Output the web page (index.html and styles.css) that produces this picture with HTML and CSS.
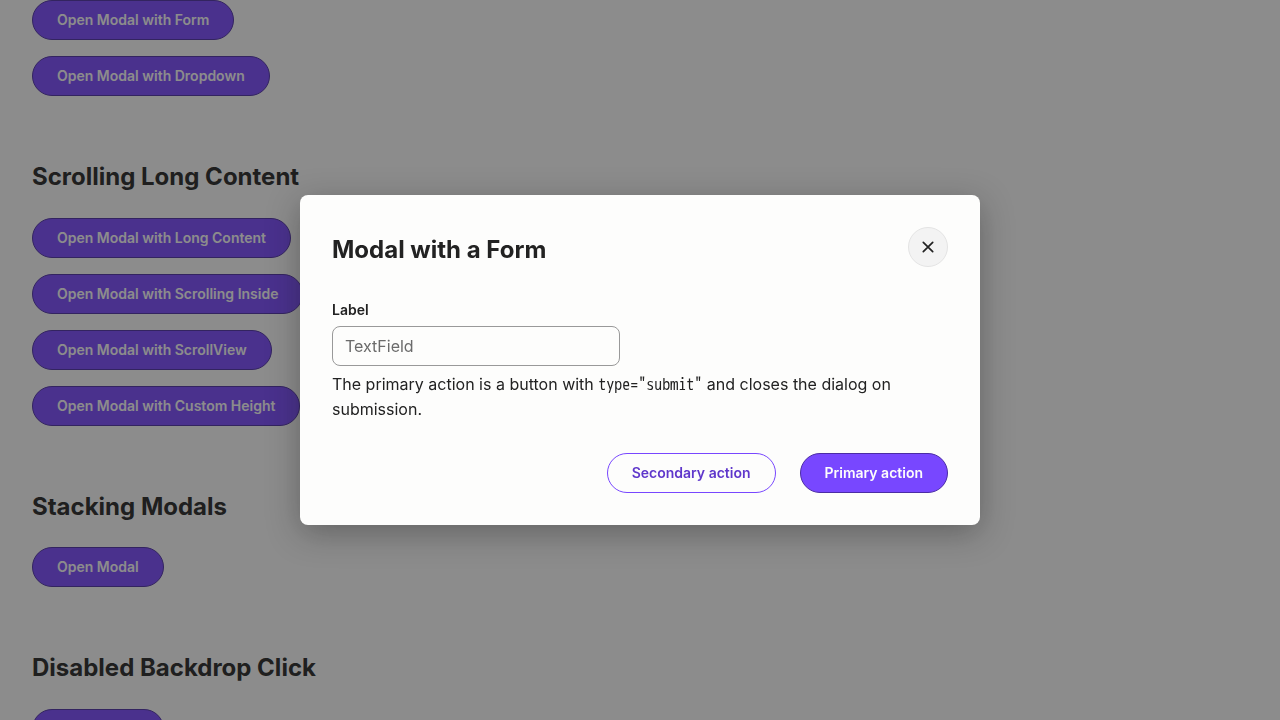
FILE: index.html
```html
<!DOCTYPE html>
<html lang="en">
<head>
<meta charset="utf-8">
<meta name="viewport" content="width=device-width, initial-scale=1">
<title>Modal</title>
<link rel="stylesheet" href="styles.css">
</head>
<body>
<main class="page">
  <section class="group">
    <button class="button primary" type="button">Open Modal with Form</button>
    <button class="button primary" type="button">Open Modal with Dropdown</button>
  </section>
  <section class="group">
    <h2 class="heading">Scrolling Long Content</h2>
    <button class="button primary" type="button">Open Modal with Long Content</button>
    <button class="button primary" type="button">Open Modal with Scrolling Inside</button>
    <button class="button primary" type="button">Open Modal with ScrollView</button>
    <button class="button primary" type="button">Open Modal with Custom Height</button>
  </section>
  <section class="group">
    <h2 class="heading">Stacking Modals</h2>
    <button class="button primary" type="button">Open Modal</button>
  </section>
  <section class="group">
    <h2 class="heading">Disabled Backdrop Click</h2>
    <button class="button primary" type="button">Open Modal</button>
  </section>
</main>
<div class="backdrop">
  <form class="modal" role="dialog" aria-modal="true" aria-labelledby="modal-title">
    <header class="modal-header">
      <h2 class="heading" id="modal-title">Modal with a Form</h2>
      <button class="close" type="button" aria-label="Close">
        <svg width="20" height="20" viewBox="0 0 20 20" fill="none" stroke="currentColor" stroke-width="1.7" stroke-linecap="round" aria-hidden="true"><path d="M5.3 5.3l9.4 9.4M14.7 5.3l-9.4 9.4"/></svg>
      </button>
    </header>
    <label class="label" for="field">Label</label>
    <input class="input" id="field" type="text" placeholder="TextField">
    <p class="text">The primary action is a button with <code class="code">type="submit"</code> and closes the dialog on submission.</p>
    <footer class="modal-footer">
      <button class="button secondary" type="button">Secondary action</button>
      <button class="button primary" type="submit">Primary action</button>
    </footer>
  </form>
</div>
</body>
</html>
```
FILE: styles.css
```css
* { box-sizing: border-box; }

body {
  margin: 0;
  height: 100vh;
  overflow: hidden;
  background: #fdfdfc;
  color: #222;
  font-family: Inter, "Liberation Sans", sans-serif;
  font-size: 16px;
}

.page {
  display: flex;
  flex-direction: column;
  gap: 64px;
  padding: 0 32px;
}

.group {
  display: flex;
  flex-direction: column;
  align-items: flex-start;
  gap: 16px;
}

.heading {
  margin: 0;
  font-size: 24px;
  font-weight: 700;
  line-height: 1.4;
}

.group .heading { margin-bottom: 8px; }

.button {
  flex-shrink: 0;
  height: 40px;
  padding: 0 24px;
  border: 1px solid;
  border-radius: 20px;
  font: 600 14px/20px Inter, "Liberation Sans", sans-serif;
  white-space: nowrap;
}

.primary {
  background: #7847ff;
  border-color: #4b2ca5;
  color: #fdfdfc;
}

.secondary {
  background: transparent;
  border-color: #7847ff;
  color: #5f37cb;
}

.backdrop {
  position: fixed;
  inset: 0;
  display: flex;
  align-items: center;
  justify-content: center;
  background: rgba(27, 27, 27, 0.5);
}

.modal {
  display: flex;
  flex-direction: column;
  width: 100%;
  max-width: 680px;
  padding: 32px;
  border-radius: 8px;
  background: #fdfdfc;
  box-shadow: 0 8px 32px rgba(26, 26, 26, 0.35);
}

.modal-header {
  display: flex;
  align-items: flex-end;
  justify-content: space-between;
  gap: 24px;
  padding-bottom: 32px;
}

.close {
  display: grid;
  place-items: center;
  width: 40px;
  height: 40px;
  padding: 0;
  border: 1px solid #e4e4e4;
  border-radius: 50%;
  background: #f3f3f3;
  color: #222;
}

.label {
  margin-bottom: 5px;
  font-size: 14px;
  font-weight: 600;
  line-height: 22px;
}

.input {
  width: 100%;
  max-width: 288px;
  height: 40px;
  padding: 0 12px;
  border: 1px solid #999;
  border-radius: 8px;
  background: #fdfdfc;
  color: #222;
  font: 400 16px/24px Inter, "Liberation Sans", sans-serif;
}

.input::placeholder { color: #6b6b6b; opacity: 1; }

.text {
  margin: 6px 0 0;
  line-height: 25px;
}

.code {
  font-family: "WenQuanYi Zen Hei Mono", "Noto Sans Mono CJK JP", monospace;
  font-size: 16px;
  line-height: 1;
}

.modal-footer {
  display: flex;
  justify-content: flex-end;
  gap: 24px;
  margin-top: 31px;
}
```
